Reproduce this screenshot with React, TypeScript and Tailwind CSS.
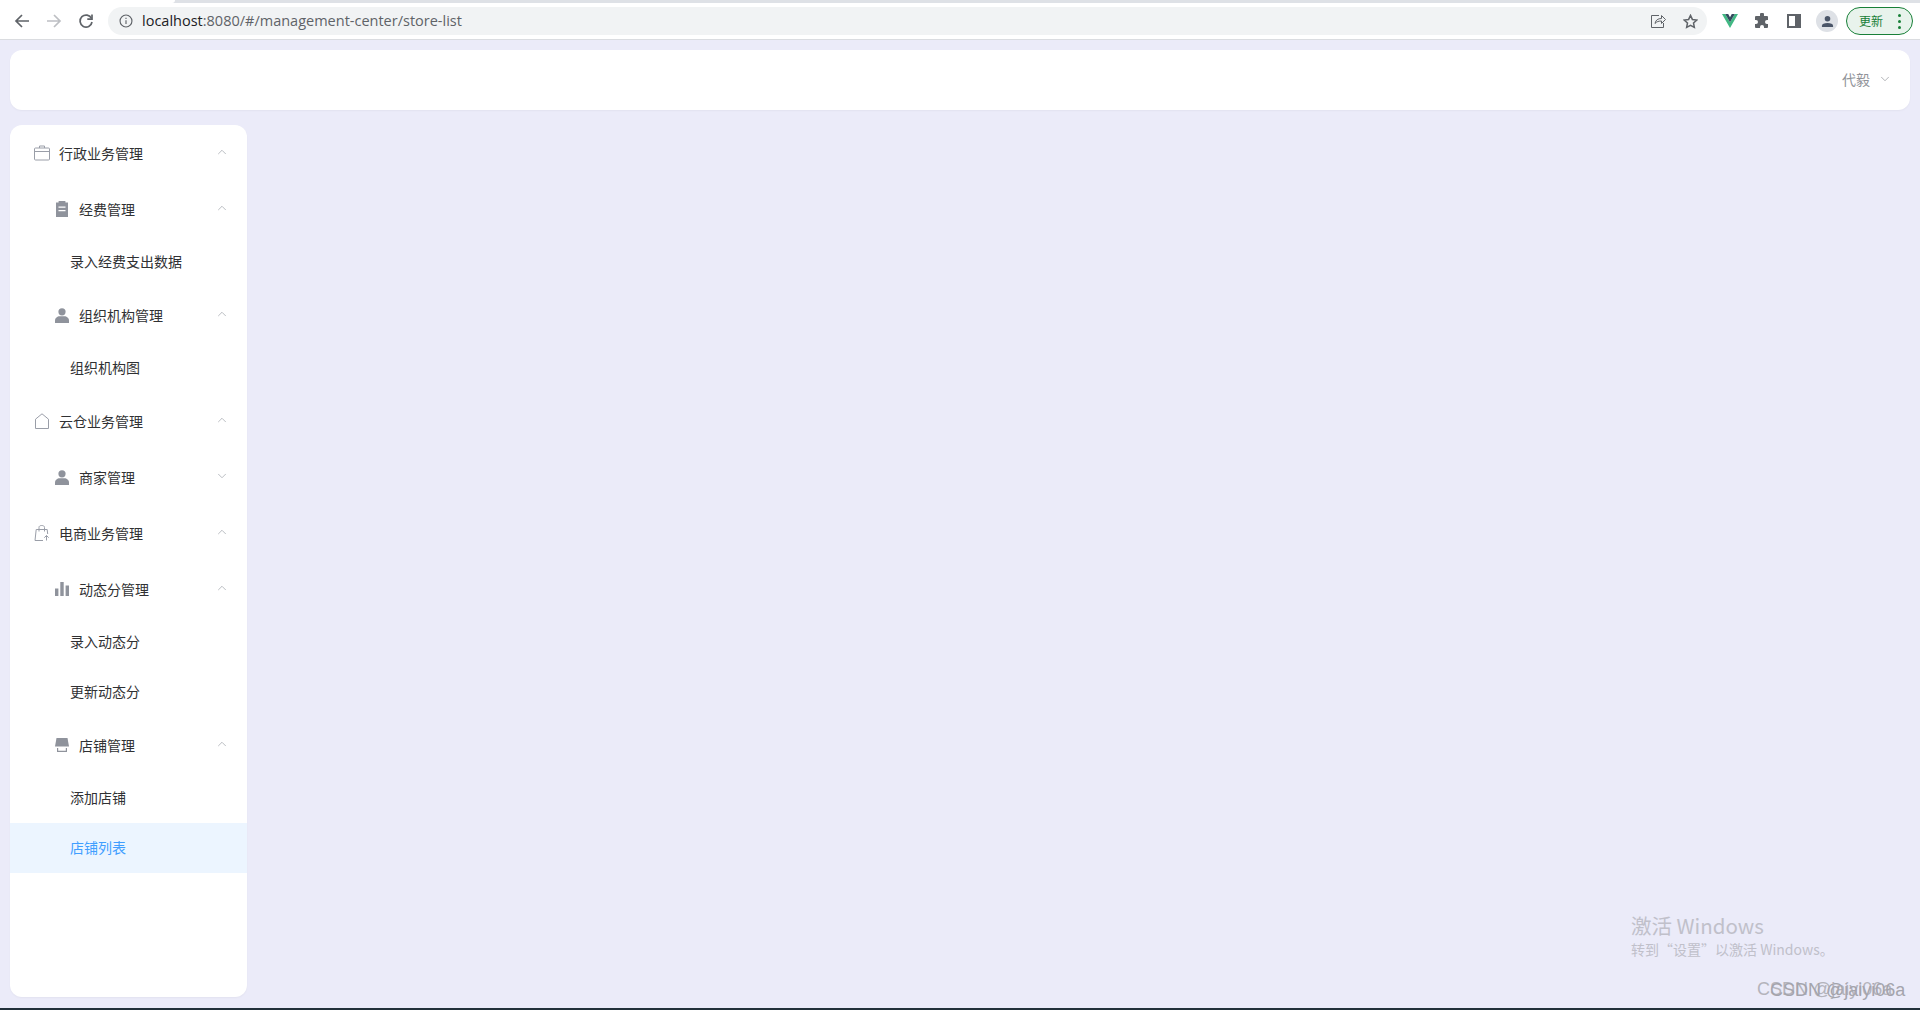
import { ReactNode } from "react";
import { ChevronDown, ChevronUp } from "lucide-react";

const cjk = "font-['Noto_Sans_CJK_SC','Liberation_Sans',sans-serif]";

const icons: Record<string, ReactNode> = {
  case: (
    <svg viewBox="0 0 16 16" className="h-4 w-4" fill="none" stroke="#9a9ea8" strokeWidth="1">
      <rect x="0.5" y="3" width="15" height="12" rx="1" />
      <path d="M0.5 6.500h15M5.500 3V1h5v2" />
    </svg>
  ),
  ticket: (
    <svg viewBox="0 0 14 16" className="h-4 w-[14px]">
      <path fill="#8f939c" d="M1 1.500h2.600V0h6.800v1.500H13V16H1z" />
      <path fill="#fff" d="M3.500 5.500h7v1.200h-7zM3.500 9h7v1.200h-7z" />
    </svg>
  ),
  user: (
    <svg viewBox="0 0 14 15" className="h-[15px] w-[14px]" fill="#8f939c">
      <circle cx="7" cy="3.800" r="3.600" />
      <path d="M0 15v-2.400C0 10 2.400 8.300 4.600 8.300h4.800c2.200 0 4.600 1.700 4.600 4.300V15z" />
    </svg>
  ),
  house: (
    <svg viewBox="0 0 16 16" className="h-4 w-4" fill="none" stroke="#9a9ea8" strokeWidth="1">
      <path d="M1.500 15.500V6.200L8 .8l6.500 5.400v9.300z" />
    </svg>
  ),
  bag: (
    <svg viewBox="0 0 16 16" className="h-4 w-4" fill="none" stroke="#9a9ea8" strokeWidth="1">
      <path d="M9 15.500H1L2.200 4.500h11l.5 4.500M5 6.500V2.500C5 1 6.200.5 7.700.5s2.800.5 2.800 2v4M12.500 15.500V10.500M10.300 12.700l2.200-2.200 2.200 2.200" />
    </svg>
  ),
  data: (
    <svg viewBox="0 0 14 14" className="h-[14px] w-[14px]" fill="#8f939c">
      <path d="M0 6.500h3.400V14H0zM5.300 0h3.400v14H5.300zM10.600 3.500H14V14h-3.400z" />
    </svg>
  ),
  shop: (
    <svg viewBox="0 0 14 14" className="h-[14px] w-[14px]">
      <path fill="#8f939c" d="M1.500 0h11L14 8.500H0z" />
      <path fill="#8f939c" d="M2 10h1.200v2.800h7.600V10H12v4H2z" />
    </svg>
  ),
};

function Arrow({ open = true }: { open?: boolean }) {
  const Icon = open ? ChevronUp : ChevronDown;
  return <Icon size={14} strokeWidth={1.300} className="mr-[18px] ml-auto -translate-y-[1px] text-[#a5a9b0]" />;
}

function GroupRow({ icon, label, open }: { icon: string; label: string; open?: boolean }) {
  return (
    <div className="flex h-14 items-center pl-6 text-sm text-[#303133]">
      <span className="flex w-4 justify-center">{icons[icon]}</span>
      <span className="ml-[9px]">{label}</span>
      <Arrow open={open} />
    </div>
  );
}

function SubRow({ icon, label, open }: { icon: string; label: string; open?: boolean }) {
  return (
    <div className="flex h-14 items-center pl-[45px] text-sm text-[#303133]">
      <span className="flex w-[14px] justify-center">{icons[icon]}</span>
      <span className="ml-[10px]">{label}</span>
      <Arrow open={open} />
    </div>
  );
}

function LeafRow({ label, active }: { label: string; active?: boolean }) {
  return (
    <div
      className={
        active
          ? "flex h-[50px] items-center bg-[#ecf5ff] pb-[2px] pl-[60px] text-sm text-[#409eff]"
          : "flex h-[50px] items-center pb-[2px] pl-[60px] text-sm text-[#303133]"
      }
    >
      {label}
    </div>
  );
}

function Sidebar() {
  return (
    <aside className="h-[872px] w-[237px] rounded-xl bg-white shadow-[0_1px_2px_rgba(0,0,0,0.04)]">
      <GroupRow icon="case" label="行政业务管理" />
      <SubRow icon="ticket" label="经费管理" />
      <LeafRow label="录入经费支出数据" />
      <SubRow icon="user" label="组织机构管理" />
      <LeafRow label="组织机构图" />
      <GroupRow icon="house" label="云仓业务管理" />
      <SubRow icon="user" label="商家管理" open={false} />
      <GroupRow icon="bag" label="电商业务管理" />
      <SubRow icon="data" label="动态分管理" />
      <LeafRow label="录入动态分" />
      <LeafRow label="更新动态分" />
      <SubRow icon="shop" label="店铺管理" />
      <LeafRow label="添加店铺" />
      <LeafRow label="店铺列表" active />
    </aside>
  );
}

function BrowserBar() {
  return (
    <div className="shrink-0">
      <div className="flex h-[3px] bg-[#dee1e6]">
        <div className="w-[175px] rounded-br-md bg-white" />
      </div>
      <div className="flex h-[37px] items-center border-b border-[#dadce0] bg-white pr-[7px] pl-[14px]">
        <svg viewBox="0 0 16 16" className="h-4 w-4" fill="none" stroke="#5f6368" strokeWidth="1.700">
          <path d="M15 8H2M8 2 2 8l6 6" />
        </svg>
        <svg viewBox="0 0 16 16" className="ml-4 h-4 w-4" fill="none" stroke="#bdbfc3" strokeWidth="1.700">
          <path d="M1 8h13M8 2l6 6-6 6" />
        </svg>
        <svg viewBox="0 0 16 16" className="ml-4 h-4 w-4" fill="none" stroke="#5f6368" strokeWidth="1.700">
          <path d="M13.500 5.500A6 6 0 1 0 14 9" />
          <path d="M14 1.500v4.700H9.300" />
        </svg>
        <div className="ml-[14px] flex h-7 flex-1 items-center rounded-full bg-[#f1f3f4] pr-[9px] pl-[11px]">
          <svg viewBox="0 0 16 16" className="h-[14px] w-[14px]" fill="none" stroke="#5f6368" strokeWidth="1.300">
            <circle cx="8" cy="8" r="6.800" />
            <path d="M8 7v4.500M8 4.300v1.400" />
          </svg>
          <span className="ml-[9px] font-['Open_Sans',sans-serif] text-[14.5px] text-[#5f6368]">
            <span className="text-[#202124]">localhost</span>:8080/#/management-center/store-list
          </span>
          <svg viewBox="0 0 16 16" className="mr-[17px] ml-auto h-4 w-4" fill="none" stroke="#5f6368" strokeWidth="1">
            <path d="M9 2.500H1.500v12h12V10M5 10.500c.5-3.500 3-5 6.500-5V2.500l4 4-4 4V8C9 8 6.500 8.500 5 10.500z" />
          </svg>
          <svg viewBox="0 0 16 16" className="h-[15px] w-[15px]" fill="none" stroke="#5f6368" strokeWidth="1.600">
            <path d="M8 1.500l2 4.300 4.700.6-3.500 3.200.9 4.700L8 12l-4.100 2.300.9-4.700-3.500-3.200 4.700-.6z" />
          </svg>
        </div>
        <svg viewBox="0 0 16 14" className="ml-[15px] h-[14px] w-4">
          <path fill="#41b883" d="M0 0h3.200L8 8.200 12.800 0H16L8 14z" />
          <path fill="#34495e" d="M3.200 0h3L8 3.200 9.800 0h3L8 8.200z" />
        </svg>
        <svg viewBox="0 0 16 16" className="ml-4 h-4 w-4" fill="#5f6368">
          <path d="M6 1.500a2 2 0 0 1 4 0V3h3a1 1 0 0 1 1 1v3h-1a2 2 0 0 0 0 4h1v3a1 1 0 0 1-1 1h-3v-1a2 2 0 0 0-4 0v1H2a1 1 0 0 1-1-1v-3h1a2 2 0 0 0 0-4H1V4a1 1 0 0 1 1-1h4z" />
        </svg>
        <svg viewBox="0 0 14 14" className="ml-[17px] h-[14px] w-[14px]">
          <path fill="#5f6368" d="M0 0h14v14H0z" />
          <path fill="#fff" d="M2 2h6v10H2z" />
        </svg>
        <div className="ml-[15px] flex h-[22px] w-[22px] items-center justify-center rounded-full bg-[#dee1e6]">
          <svg viewBox="0 0 14 14" className="h-[13px] w-[13px]" fill="#4a5568">
            <circle cx="7" cy="4" r="3" />
            <path d="M1 13v-1.500C1 9.500 3.500 8.500 7 8.500s6 1 6 3V13z" />
          </svg>
        </div>
        <div
          className={`ml-[8px] flex h-[28px] w-[67px] items-center justify-between rounded-full border border-[#188038] bg-[#e8f3ec] pr-[11px] pl-[12px] text-xs text-[#188038] ${cjk}`}
        >
          更新
          <span className="flex flex-col gap-[3px]">
            <i className="h-[3px] w-[3px] rounded-full bg-[#188038]" />
            <i className="h-[3px] w-[3px] rounded-full bg-[#188038]" />
            <i className="h-[3px] w-[3px] rounded-full bg-[#188038]" />
          </span>
        </div>
      </div>
    </div>
  );
}

export default function App() {
  return (
    <div className={`relative flex h-[1010px] flex-col overflow-hidden bg-[#ebebf9] ${cjk}`}>
      <BrowserBar />
      <div className="flex flex-1 flex-col px-[10px] pt-[10px]">
        <header className="flex h-[60px] items-center justify-end rounded-xl bg-white pr-[18px] pb-[2px] text-sm text-[#909399] shadow-[0_1px_2px_rgba(0,0,0,0.04)]">
          代毅
          <ChevronDown size={14} strokeWidth={1.200} className="ml-[8px] text-[#909399]" />
        </header>
        <div className="mt-[15px]">
          <Sidebar />
        </div>
      </div>
      <div className="h-[2px] shrink-0 bg-[#22303a]" />

      {/* system watermarks sit over the page */}
      <div className="absolute top-[911px] left-[1631px] text-[#c0c0ca]">
        <div className="text-[20.5px] leading-7">激活 Windows</div>
        <div className="text-sm leading-5 whitespace-nowrap">转到“设置”以激活 Windows。</div>
      </div>
      <div className="absolute top-[979px] left-[1757px] font-['Liberation_Sans',sans-serif] text-lg leading-5 text-[#b4b4bc]">
        CSDN @jaiyi06a
      </div>
      <div className="absolute top-[980px] left-[1770px] font-['Liberation_Sans',sans-serif] text-lg leading-5 text-[#a4a4ac]">
        CSDN @jaiyi06a
      </div>
    </div>
  );
}
